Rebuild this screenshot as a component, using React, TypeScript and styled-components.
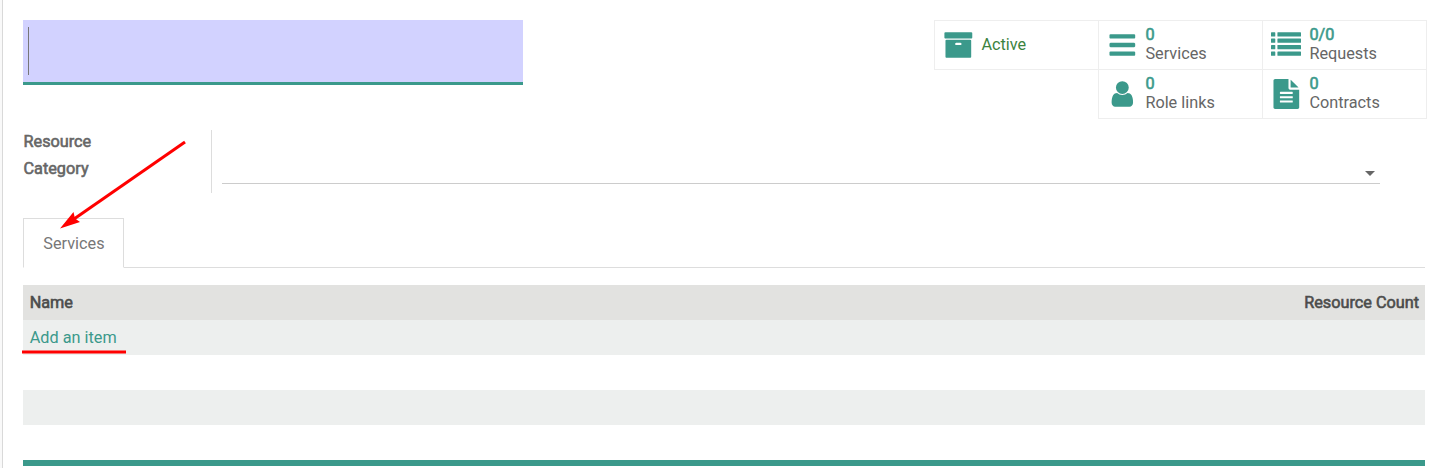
import React from 'react';
import styled, { createGlobalStyle } from 'styled-components';

const TEAL = '#3b998b';

const GlobalStyle = createGlobalStyle`
  * { box-sizing: border-box; }
  body {
    margin: 0;
    background: #f9f9f9;
    color: #666;
    font: 16.25px/19px Roboto, sans-serif;
    overflow: hidden;
  }
`;

const Sheet = styled.main`
  position: relative;
  height: 468px;
  margin-left: 2px;
  padding: 20px 15px 0 20px;
  border-left: 1px solid #d9d9d9;
  background: #fff;
  overflow: hidden;
`;

const Header = styled.header`
  display: flex;
  justify-content: space-between;
  align-items: flex-start;
  height: 110px;
`;

const TitleField = styled.div`
  width: 500px;
  height: 65px;
  padding: 7px 5px;
  background: #d2d2ff;
  border-bottom: 3px solid ${TEAL};
`;

const Caret = styled.div`
  width: 1px;
  height: 48px;
  background: #777;
`;

const Stats = styled.div`
  display: grid;
  grid-template-columns: repeat(3, 164px);
  grid-auto-rows: 49px;
  padding: 0 1px 1px 0;
`;

const StatButton = styled.div<{ $column?: number }>`
  grid-column: ${(p) => p.$column ?? 'auto'};
  display: flex;
  align-items: center;
  gap: 8.4px;
  margin: 0 -1px -1px 0;
  padding-left: 8px;
  border: 1px solid #eee;
`;

const IconSvg = styled.svg`
  width: 30px;
  height: 30px;
  flex: none;
  overflow: visible;
  fill: ${TEAL};
`;

const StatText = styled.div`
  display: flex;
  flex-direction: column;
  padding-bottom: 2px;
`;

const StatValue = styled.span`
  color: ${TEAL};
  -webkit-text-stroke: 0.6px ${TEAL};
`;

const ActiveLabel = styled.span`
  padding-bottom: 2px;
  color: #3c8340;
`;

const Group = styled.section`
  display: flex;
  height: 63px;
`;

const FieldLabel = styled.label`
  width: 189px;
  height: 63px;
  padding-left: 0.5px;
  border-right: 1px solid #ddd;
  line-height: 27px;
  span {
    display: block;
    width: 90px;
    margin-top: -2px;
    -webkit-text-stroke: 0.6px #666;
  }
`;

const SelectField = styled.div`
  display: flex;
  justify-content: flex-end;
  align-items: flex-end;
  width: 1158px;
  height: 54px;
  margin-left: 10px;
  padding: 0 5px 7px;
  border-bottom: 1px solid #ccc;
`;

const Triangle = styled.i`
  border: 5px solid transparent;
  border-top-color: #666;
  border-bottom: 0;
`;

const Tabs = styled.nav`
  display: flex;
  width: 1402px;
  height: 50px;
  margin-top: 25px;
  border-bottom: 1px solid #ddd;
`;

const Tab = styled.div`
  width: 101px;
  height: 50px;
  padding: 15px 0 0 19.3px;
  border: 1px solid #ddd;
  border-bottom-color: #fff;
  background: #fff;
  color: #777;
`;

const Table = styled.section`
  width: 1402px;
  margin-top: 17px;
`;

const Row = styled.div<{ $tone?: 'head' | 'odd' }>`
  display: flex;
  justify-content: space-between;
  align-items: center;
  height: 35px;
  padding: 0 6px 0 6.7px;
  background: ${(p) => (p.$tone === 'head' ? '#e2e2e0' : p.$tone === 'odd' ? '#edefee' : '#fff')};
`;

const HeadCell = styled.span`
  color: #4c4c4c;
  -webkit-text-stroke: 0.6px #4c4c4c;
`;

const AddLink = styled.span`
  color: ${TEAL};
`;

const Footer = styled.div`
  height: 6px;
  background: ${TEAL};
`;

const Annotations = styled.svg`
  position: absolute;
  left: 19px;
  top: 135px;
  width: 180px;
  height: 225px;
  pointer-events: none;
`;

const line = (y: number) =>
  `M1280 ${y}v-64q0-14-9-23t-23-9h-704q-14 0-23 9t-9 23v64q0 14 9 23t23 9h704q14 0 23-9t9-23z`;

const paths = {
  archive:
    'M1088 832q0-26-19-45t-45-19h-256q-26 0-45 19t-19 45 19 45 45 19h256q26 0 45-19t19-45zm576-192v960q0 26-19 45t-45 19h-1408q-26 0-45-19t-19-45v-960q0-26 19-45t45-19h1408q26 0 45 19t19 45zm64-448v256q0 26-19 45t-45 19h-1536q-26 0-45-19t-19-45v-256q0-26 19-45t45-19h1536q26 0 45 19t19 45z',
  bars:
    'M1664 1344v128q0 26-19 45t-45 19h-1408q-26 0-45-19t-19-45v-128q0-26 19-45t45-19h1408q26 0 45 19t19 45zm0-512v128q0 26-19 45t-45 19h-1408q-26 0-45-19t-19-45v-128q0-26 19-45t45-19h1408q26 0 45 19t19 45zm0-512v128q0 26-19 45t-45 19h-1408q-26 0-45-19t-19-45v-128q0-26 19-45t45-19h1408q26 0 45 19t19 45z',
  user:
    'M1536 1399q0 109-62.5 187t-150.5 78h-854q-88 0-150.5-78t-62.5-187q0-85 8.5-160.5t31.5-152 58.5-131 94-89 134.5-34.5q131 128 313 128t313-128q76 0 134.5 34.5t94 89 58.5 131 31.5 152 8.5 160.5zm-256-887q0 159-112.5 271.5t-271.5 112.5-271.5-112.5-112.5-271.5 112.5-271.5 271.5-112.5 271.5 112.5 112.5 271.5z',
  file:
    'M1596 476q14 14 28 36h-472v-472q22 14 36 28zm-476 164h544v1056q0 40-28 68t-68 28h-1344q-40 0-68-28t-28-68v-1600q0-40 28-68t68-28h800v544q0 40 28 68t68 28z' +
    line(1376) + line(1120) + line(864),
};

const Icon = ({ name }: { name: keyof typeof paths }) => (
  <IconSvg viewBox="-20 0 1792 1792">
    <path fillRule="evenodd" d={paths[name]} />
  </IconSvg>
);

const ListIcon = () => (
  <IconSvg viewBox="0 0 1792 1792">
    {[128, 512, 896, 1280].map((y) => (
      <React.Fragment key={y}>
        <rect x="0" y={y} width="256" height="256" rx="32" />
        <rect x="384" y={y} width="1408" height="256" rx="32" />
      </React.Fragment>
    ))}
  </IconSvg>
);

interface StatProps {
  icon: React.ReactNode;
  value: string;
  label: string;
  column?: number;
}

const Stat = ({ icon, value, label, column }: StatProps) => (
  <StatButton $column={column}>
    {icon}
    <StatText>
      <StatValue>{value}</StatValue>
      <span>{label}</span>
    </StatText>
  </StatButton>
);

export default function App() {
  return (
    <>
      <GlobalStyle />
      <Sheet>
        <Header>
          <TitleField>
            <Caret />
          </TitleField>
          <Stats>
            <StatButton>
              <Icon name="archive" />
              <ActiveLabel>Active</ActiveLabel>
            </StatButton>
            <Stat icon={<Icon name="bars" />} value="0" label="Services" />
            <Stat icon={<ListIcon />} value="0/0" label="Requests" />
            <Stat icon={<Icon name="user" />} value="0" label="Role links" column={2} />
            <Stat icon={<Icon name="file" />} value="0" label="Contracts" />
          </Stats>
        </Header>
        <Group>
          <FieldLabel>
            <span>Resource Category</span>
          </FieldLabel>
          <SelectField>
            <Triangle />
          </SelectField>
        </Group>
        <Tabs>
          <Tab>Services</Tab>
        </Tabs>
        <Table>
          <Row $tone="head">
            <HeadCell>Name</HeadCell>
            <HeadCell>Resource Count</HeadCell>
          </Row>
          <Row $tone="odd">
            <AddLink>Add an item</AddLink>
          </Row>
          <Row />
          <Row $tone="odd" />
          <Row />
          <Footer />
        </Table>
        <Annotations viewBox="22 135 180 225">
          <path d="M185 142L74 219" stroke="#f00" strokeWidth="3" />
          <path d="M60 228.5L73.5 212L75 218.5L80 222Z" fill="#f00" />
          <path d="M22 352H126" stroke="#f00" strokeWidth="3" />
        </Annotations>
      </Sheet>
    </>
  );
}
